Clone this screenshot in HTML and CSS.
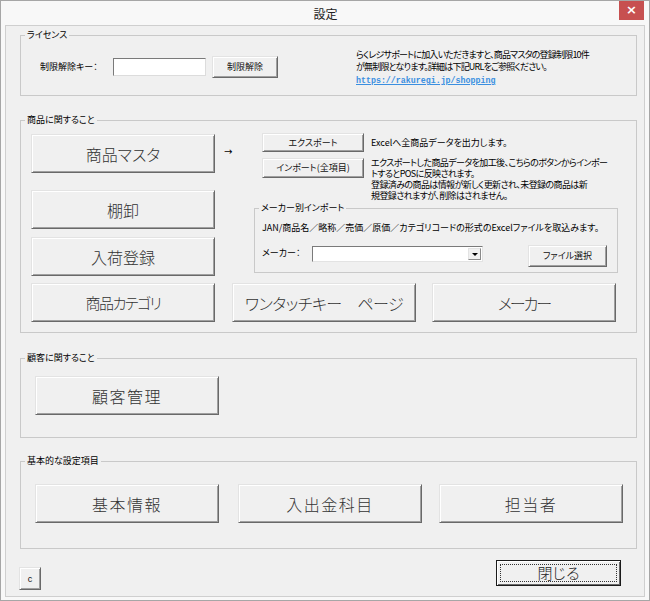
FILE: index.html
```html
<!DOCTYPE html>
<html lang="ja">
<head>
<meta charset="utf-8">
<title>設定</title>
<link rel="stylesheet" href="styles.css">
</head>
<body>
<div class="window">
  <div class="titlebar">
    <span class="title">設定</span>
    <span class="close">×</span>
  </div>
  <div class="client">
    <section class="group g-license">
      <span class="legend">ライセンス</span>
      <div class="lic-left">
        <span class="lbl">制限解除キー：</span>
        <span class="input"></span>
        <button class="btn btn-unlock">制限解除</button>
      </div>
      <div class="lic-right">
        <p class="small lic-text">らくレジサポートに加入いただきますと、商品マスタの登録制限10件<br>が無制限となります。詳細は下記URLをご参照ください。</p>
        <a class="link" href="#">https://rakuregi.jp/shopping</a>
      </div>
    </section>

    <section class="group g-prod">
      <span class="legend">商品に関すること</span>
      <div class="prod-top">
        <div class="col-left">
          <button class="btn big b-master">商品マスタ</button>
          <button class="btn big b-tana">棚卸</button>
          <button class="btn big b-nyuka">入荷登録</button>
        </div>
        <div class="col-right">
          <div class="xfer">
            <span class="arrow">→</span>
            <button class="btn b-export">エクスポート</button>
            <p class="small desc1">Excelへ全商品データを出力します。</p>
            <button class="btn b-import">インポート(全項目)</button>
            <p class="small desc2">エクスポートした商品データを加工後、こちらのボタンからインポー<br>トするとPOSに反映されます。<br>登録済みの商品は情報が新しく更新され、未登録の商品は新<br>規登録されますが、削除はされません。</p>
          </div>
          <section class="group g-maker">
            <span class="legend">メーカー別インポート</span>
            <p class="small jan">JAN/商品名／略称／売価／原価／カテゴリコードの形式のExcelファイルを取込みます。</p>
            <div class="maker-row">
              <span class="small mlbl">メーカー：</span>
              <span class="select"><span class="drop"></span></span>
              <button class="btn b-file">ファイル選択</button>
            </div>
          </section>
        </div>
      </div>
      <div class="prod-row">
        <button class="btn big b-cat">商品カテゴリ</button>
        <button class="btn big b-mid">ワンタッチキー　ページ</button>
        <button class="btn big b-last">メーカー</button>
      </div>
    </section>

    <section class="group g-cust">
      <span class="legend">顧客に関すること</span>
      <button class="btn big kanji b-cust">顧客管理</button>
    </section>

    <section class="group g-basic">
      <span class="legend">基本的な設定項目</span>
      <div class="basic-row">
        <button class="btn big kanji">基本情報</button>
        <button class="btn big kanji b-mid2">入出金科目</button>
        <button class="btn big kanji b-last2">担当者</button>
      </div>
    </section>

    <div class="footer">
      <button class="btn b-c">c</button>
      <button class="btn-default"><span class="focus">閉じる</span></button>
    </div>
  </div>
</div>
</body>
</html>
```

FILE: styles.css
```css
* { box-sizing: border-box; }

body {
  margin: 0;
  background: #ffffff;
  font-family: "Noto Sans CJK JP", "Noto Sans", sans-serif;
  font-feature-settings: "palt" 1;
  color: #000;
}

.window {
  width: 650px;
  height: 601px;
  border: 1px solid #a6a6a6;
  background: #f8f8f8;
  display: flex;
  flex-direction: column;
}

.titlebar {
  height: 24px;
  flex: none;
  display: flex;
  align-items: flex-start;
}

.title {
  flex: 1;
  text-align: center;
  padding-left: 31px;
  font-size: 12px;
  line-height: 26px;
  color: #222;
}

.close {
  width: 25px;
  height: 19px;
  margin-right: 5px;
  background: #c75050;
  color: #fff;
  font-family: "DejaVu Sans", sans-serif;
  font-size: 13px;
  font-weight: bold;
  line-height: 18px;
  text-align: center;
}

.client {
  flex: 1;
  margin: 0 4px 3px 4px;
  border: 1px solid #cfcfcf;
  background: #f0f0f0;
  display: flex;
  flex-direction: column;
}

.small {
  margin: 0;
  font-size: 9px;
  line-height: 12px;
  white-space: nowrap;
}

/* group boxes */
.group {
  position: relative;
  border: 1px solid #c9c9c9;
  margin-left: 14px;
  width: 617px;
  flex: none;
}

.legend {
  position: absolute;
  top: -7px;
  left: 4px;
  padding: 0 2px;
  background: #f0f0f0;
  font-size: 9px;
  line-height: 12px;
  white-space: nowrap;
}

/* buttons */
.btn {
  font-family: inherit;
  font-feature-settings: "palt" 1;
  color: #111;
  background: #f0f0f0;
  border: 1px solid;
  border-color: #e3e3e3 #696969 #696969 #e3e3e3;
  box-shadow: inset 1px 1px #ffffff, inset -1px -1px #a0a0a0;
  padding: 0;
  margin: 0;
  font-size: 9px;
  line-height: 12px;
  white-space: nowrap;
  flex: none;
}

.btn.big {
  width: 184px;
  height: 39px;
  font-size: 16px;
  font-weight: 300;
  letter-spacing: 0;
  color: #333;
}

.btn.kanji { letter-spacing: 1.5px; }

.b-cat { font-size: 15px !important; letter-spacing: -1.5px !important; }
.b-last { letter-spacing: -2px !important; }

/* license */
.g-license {
  margin-top: 9px;
  height: 61px;
  display: flex;
  align-items: flex-start;
}

.lic-left {
  margin-left: 19px;
  margin-top: 20px;
  display: flex;
  align-items: center;
}

.lbl {
  width: 73px;
  font-size: 9px;
  line-height: 12px;
}

.input {
  width: 93px;
  height: 18px;
  background: #fff;
  border: 1px solid;
  border-color: #7a7a7a #dcdcdc #dcdcdc #7a7a7a;
}

.btn-unlock {
  width: 66px;
  height: 22px;
  margin-left: 6px;
}

.lic-right {
  margin-left: 78px;
  margin-top: 13px;
  display: flex;
  flex-direction: column;
  align-items: flex-start;
}

.lic-text { letter-spacing: -0.8px; }

.link {
  margin-top: 2px;
  font-family: "Liberation Mono", monospace;
  font-size: 8.3px;
  font-weight: bold;
  line-height: 12px;
  color: #3b8fe0;
  text-decoration: underline;
}

/* products */
.g-prod {
  margin-top: 24px;
  height: 213px;
}

.prod-top {
  display: flex;
}

.col-left {
  margin-left: 10px;
  margin-top: 13px;
  display: flex;
  flex-direction: column;
}

.b-master { height: 40px; }
.b-tana { margin-top: 17px; }
.b-nyuka { margin-top: 8px; }

.col-right {
  display: flex;
  flex-direction: column;
}

.xfer {
  margin-top: 12px;
  display: grid;
  grid-template-columns: 47px 102px auto;
  grid-template-rows: 19px auto;
  row-gap: 6px;
}

.arrow {
  grid-column: 1;
  grid-row: 1 / 3;
  align-self: start;
  margin-top: 13px;
  padding-left: 9px;
  font-size: 10px;
  line-height: 12px;
  font-family: "DejaVu Sans", sans-serif;
}

.b-export {
  grid-column: 2;
  grid-row: 1;
  height: 19px;
}

.b-import {
  grid-column: 2;
  grid-row: 2;
  height: 20px;
  align-self: start;
}

.desc1 {
  grid-column: 3;
  grid-row: 1;
  align-self: center;
  margin-left: 7px;
}

.desc2 {
  grid-column: 3;
  grid-row: 2;
  margin-left: 7px;
  line-height: 11px;
  margin-top: -1px;
  letter-spacing: -0.6px;
}

.g-maker {
  margin-left: 39px;
  margin-top: 7px;
  width: 364px;
  height: 65px;
  padding-left: 7px;
}

.jan {
  margin-top: 13px;
}

.maker-row {
  margin-top: 11px;
  display: flex;
  align-items: flex-start;
}

.mlbl {
  width: 50px;
  margin-top: 2px;
}

.select {
  width: 171px;
  height: 16px;
  margin-top: 1px;
  background: #fff;
  border: 1px solid;
  border-color: #7a7a7a #e3e3e3 #e3e3e3 #7a7a7a;
  display: flex;
  justify-content: flex-end;
  align-items: center;
}

.drop {
  width: 13px;
  height: 12px;
  margin-right: 1px;
  background: #f0f0f0;
  border: 1px solid;
  border-color: #e3e3e3 #8a8a8a #8a8a8a #e3e3e3;
  position: relative;
}

.drop::after {
  content: "";
  position: absolute;
  left: 3px;
  top: 4px;
  border-left: 3px solid transparent;
  border-right: 3px solid transparent;
  border-top: 3px solid #000;
}

.b-file {
  width: 79px;
  height: 22px;
  margin-left: 45px;
}

.prod-row {
  margin-top: 7px;
  margin-left: 10px;
  display: flex;
}

.b-mid { margin-left: 17px; letter-spacing: -0.5px !important; }
.b-last { margin-left: 16px; }

/* customers */
.g-cust {
  margin-top: 25px;
  height: 80px;
}

.b-cust {
  margin-left: 14px;
  margin-top: 17px;
  height: 38px;
}

/* basic */
.g-basic {
  margin-top: 23px;
  height: 88px;
}

.basic-row {
  margin-left: 14px;
  margin-top: 22px;
  display: flex;
}

.b-mid2 { margin-left: 19px; }
.b-last2 { margin-left: 17px; }

/* footer */
.footer {
  display: flex;
  align-items: flex-start;
}

.b-c {
  width: 22px;
  height: 23px;
  margin-left: 13px;
  margin-top: 18px;
  font-family: "Liberation Sans", sans-serif;
  font-size: 9px;
}

.btn-default {
  margin-left: auto;
  margin-right: 23px;
  margin-top: 11px;
  width: 125px;
  height: 26px;
  padding: 3px;
  background: #f0f0f0;
  border: 1px solid #1a1a1a;
  box-shadow: inset 1px 1px #ffffff, inset -1px -1px #696969;
  font-family: inherit;
}

.focus {
  display: block;
  height: 100%;
  border: 1px dotted #333;
  font-size: 15px;
  font-weight: 300;
  letter-spacing: -1px;
  line-height: 16px;
  color: #222;
}
```
